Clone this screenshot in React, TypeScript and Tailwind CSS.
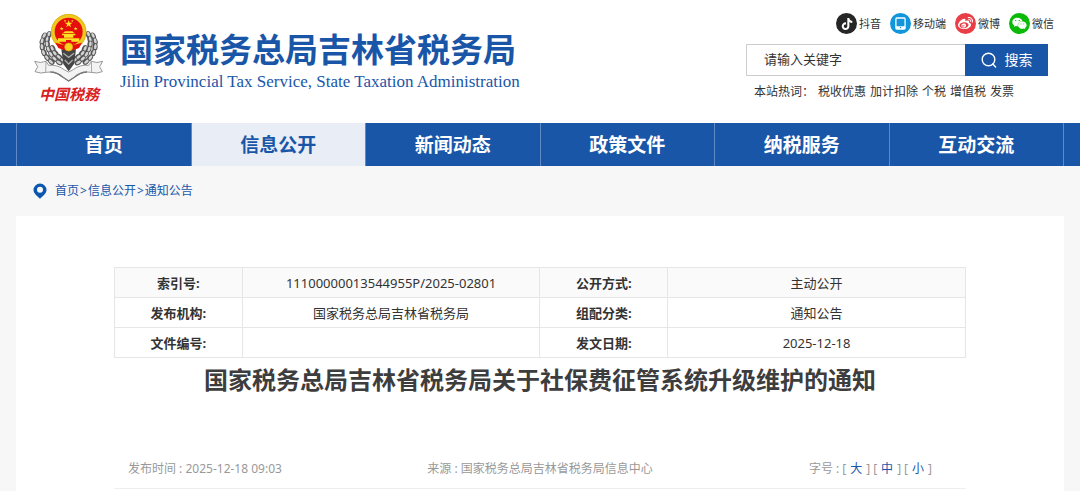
import { FaTiktok, FaWeibo, FaWeixin } from "react-icons/fa6";
import clsx from "clsx";

const socials = [
  { name: "抖音", color: "bg-[#262626]", icon: <FaTiktok className="size-3" /> },
  { name: "移动端", color: "bg-[#1296db]", icon: <TabletIcon /> },
  { name: "微博", color: "bg-[#ea3e46]", icon: <FaWeibo className="size-[15px]" /> },
  { name: "微信", color: "bg-[#09bb07]", icon: <FaWeixin className="size-[15px]" /> },
];

const hotWords = ["税收优惠", "加计扣除", "个税", "增值税", "发票"];

const navItems = ["首页", "信息公开", "新闻动态", "政策文件", "纳税服务", "互动交流"];

const crumbs = ["首页", "信息公开", "通知公告"];

const rows = [
  ["索引号:", "11100000013544955P/2025-02801", "公开方式:", "主动公开"],
  ["发布机构:", "国家税务总局吉林省税务局", "组配分类:", "通知公告"],
  ["文件编号:", "", "发文日期:", "2025-12-18"],
];

function TabletIcon() {
  return (
    <svg viewBox="0 0 12 14" className="h-[13px] w-[11px]" aria-hidden="true">
      <rect x="1" y="1" width="10" height="12" rx="1" fill="none" stroke="#fff" strokeWidth="1.4" />
      <path d="M1 10h10v3H1z" fill="#fff" />
      <circle cx="6" cy="11.4" r="0.8" fill="#1296db" />
    </svg>
  );
}

function Star({ x, y, r }: { x: number; y: number; r: number }) {
  const points = Array.from({ length: 10 }, (_, i) => {
    const radius = i % 2 ? r * 0.4 : r;
    const angle = (Math.PI / 5) * i - Math.PI / 2;
    return `${x + radius * Math.cos(angle)},${y + radius * Math.sin(angle)}`;
  }).join(" ");
  return <polygon points={points} fill="#fbe122" />;
}

const leaves = [
  [45, 62, 20], [40, 76, 10], [40, 91, -5], [44, 106, -20], [52, 121, -35], [63, 134, -48], [76, 145, -60],
  [31, 66, 30], [25, 82, 15], [25, 99, -5], [30, 116, -20], [40, 131, -35], [52, 143, -50],
  [56, 104, -25], [64, 118, -40], [76, 129, -50], [88, 138, -60],
];

function Wreath() {
  return (
    <g>
      {leaves.map(([x, y, a]) => (
        <g key={`${x}-${y}`} transform={`rotate(${a} ${x} ${y})`}>
          <ellipse cx={x} cy={y} rx="8" ry="11" fill="#555" />
          <ellipse cx={x - 1} cy={y - 1} rx="4" ry="8" fill="#d4d4d4" />
        </g>
      ))}
    </g>
  );
}

function Emblem() {
  return (
    <svg viewBox="0 0 210 204" className="h-[68px] w-[70px]" aria-hidden="true">
      <Wreath />
      <g transform="translate(208 0) scale(-1 1)">
        <Wreath />
      </g>
      <path d="M82 106h44l-6 44-16 22-16-22z" fill="#444" />
      <path d="M88 118l16 12 16-12M92 138l12 12 12-12" fill="none" stroke="#aaa" strokeWidth="4" />
      <ellipse cx="104" cy="54" rx="53" ry="54" fill="#f0c81e" />
      <ellipse cx="104" cy="54" rx="52" ry="53" fill="none" stroke="#dba81a" strokeWidth="2" />
      <ellipse cx="104" cy="53" rx="42" ry="42" fill="#e60d0d" />
      <path d="M64 86q40 14 80 0l-9 16q-31 16-62 0z" fill="#e60d0d" />
      <circle cx="104" cy="99" r="12" fill="#f7d51d" stroke="#dba81a" strokeWidth="2" />
      <Star x={104} y={30} r={12} />
      <Star x={83} y={44} r={6} />
      <Star x={93} y={21} r={4} />
      <Star x={115} y={21} r={4} />
      <Star x={125} y={44} r={6} />
      <path d="M87 57l6-5h22l6 5zM84 59h40v5H84zM90 64h28v7H90zM72 73h64v10h-24v-5H96v5H72z" fill="#fbe122" />
      <path
        d="M2 142q17 7 34 0l8 12q26-3 48 14l12 6 12-6q22-17 48-14l8-12q17 7 34 0l-9 16 8 15q-16 7-34 2l-12-1q-20 0-38 16l-17 11-17-11q-18-16-38-16l-12 1q-18 5-34-2l8-15z"
        fill="#f3f3f3"
        stroke="#858585"
        strokeWidth="2.5"
        strokeLinejoin="round"
      />
      <path d="M36 142l-1 33M172 142l1 33" stroke="#999" strokeWidth="2.5" />
      <path d="M49 174q20 0 38 16l17 11 17-11q18-16 38-16" fill="none" stroke="#777" strokeWidth="4" />
    </svg>
  );
}

function Header() {
  return (
    <header className="mx-auto flex h-[123px] w-full max-w-[1048px] justify-between">
      <a href="#" className="flex pl-[18px] pt-[14px]">
        <span className="flex w-[70px] flex-col items-center">
          <Emblem />
          <span className="text-[15px] leading-6 font-bold whitespace-nowrap text-[#d9201f] italic">中国税務</span>
        </span>
        <span className="flex flex-col pl-4 pt-4 text-[#1a56a8]">
          <span className="text-[33px] leading-10 font-bold whitespace-nowrap">国家税务总局吉林省税务局</span>
          <span className="font-['Liberation_Serif',serif] text-[17px] leading-6 whitespace-nowrap">
            Jilin Provincial Tax Service, State Taxation Administration
          </span>
        </span>
      </a>

      <div className="flex flex-col text-[#333]">
        <ul className="flex justify-end gap-[9px] pt-[13px] pr-[10px]">
          {socials.map((item) => (
            <li key={item.name}>
              <a href="#" className="flex items-center gap-[2px] text-[11px] leading-5">
                <span className={clsx("flex size-[21px] items-center justify-center rounded-full text-white", item.color)}>
                  {item.icon}
                </span>
                {item.name}
              </a>
            </li>
          ))}
        </ul>
        <form className="mt-[10px] mr-4 flex h-8 w-[302px]">
          <input
            type="text"
            aria-label="请输入关键字"
            placeholder="请输入关键字"
            className="min-w-0 flex-1 border border-r-0 border-[#ccc] bg-white px-[17px] text-[13px] placeholder:text-[#333]"
          />
          <button type="button" className="flex w-[83px] items-center justify-center gap-2 bg-[#1a56a8] text-sm text-white">
            <svg viewBox="0 0 16 16" className="size-4" fill="none" stroke="currentColor" strokeWidth="1.4" aria-hidden="true">
              <circle cx="7.5" cy="7.5" r="6.3" />
              <path d="M11.8 12l2.8 3" strokeLinecap="round" />
            </svg>
            搜索
          </button>
        </form>
        <p className="mt-[6px] flex gap-1 pl-2 text-xs leading-5">
          <span>本站热词：</span>
          {hotWords.map((word) => (
            <a key={word} href="#">{word}</a>
          ))}
        </p>
      </div>
    </header>
  );
}

function Nav() {
  return (
    <nav className="bg-[#1a56a8]">
      <ul className="mx-auto flex h-[43px] max-w-[1048px]">
        {navItems.map((item, i) => (
          <li key={item} className="flex-1 border-l border-[#5f8ac3] last:border-r">
            <a
              href="#"
              className={clsx(
                "flex h-full items-center justify-center text-[19px] leading-6 font-bold",
                i === 1 ? "bg-[#e8edf6] text-[#1a56a8]" : "text-white"
              )}
            >
              {item}
            </a>
          </li>
        ))}
      </ul>
    </nav>
  );
}

function Breadcrumb() {
  return (
    <div className="flex h-[50px] items-center gap-2 pl-[17px] text-xs leading-5 text-[#1a56a8]">
      <svg viewBox="0 0 14 16" className="h-4 w-[14px]" aria-hidden="true">
        <path
          fillRule="evenodd"
          d="M7 .5A6.5 6.5 0 0 0 .5 7c0 3.6 3.8 6 6.5 8.7C9.700 13 13.500 10.600 13.500 7A6.500 6.500 0 0 0 7 .5zM7 3.800a3 3 0 1 1 0 6 3 3 0 0 1 0-6z"
          fill="#0b57b0"
        />
      </svg>
      <p>
        {crumbs.map((crumb, i) => (
          <span key={crumb}>
            {i > 0 && <span className="px-px">&gt;</span>}
            <a href="#">{crumb}</a>
          </span>
        ))}
      </p>
    </div>
  );
}

function InfoTable() {
  return (
    <table className="w-full table-fixed border-collapse text-center text-[13px] leading-5 text-[#333]">
      <colgroup>
        <col className="w-[15%]" />
        <col className="w-[35%]" />
        <col className="w-[15%]" />
        <col className="w-[35%]" />
      </colgroup>
      <tbody>
        {rows.map((row) => (
          <tr key={row[0]} className="h-[30px] first:bg-[#fafafa]">
            {row.map((cell, i) =>
              i % 2 === 0 ? (
                <th key={i} scope="row" className="border border-[#e6e6e6] font-bold">{cell}</th>
              ) : (
                <td key={i} className="border border-[#e6e6e6]">{cell}</td>
              )
            )}
          </tr>
        ))}
      </tbody>
    </table>
  );
}

export default function App() {
  return (
    <div className="flex min-h-screen flex-col bg-[#f7f7f7] font-['Noto_Sans','Noto_Sans_CJK_SC',sans-serif]">
      <div className="bg-white">
        <Header />
      </div>
      <Nav />
      <div className="mx-auto flex w-full max-w-[1048px] flex-1 flex-col">
        <Breadcrumb />
        <main className="flex-1 bg-white px-[98px] pt-[51px]">
          <InfoTable />
          <h1 className="mt-1 text-center text-2xl leading-9 font-bold text-[#3d3d3d]">
            国家税务总局吉林省税务局关于社保费征管系统升级维护的通知
          </h1>
          <div className="mt-[51px] grid h-10 grid-cols-3 items-center border-b border-[#eee] text-xs leading-5 text-[#999]">
            <span className="pl-[14px]">发布时间 : 2025-12-18 09:03</span>
            <span className="text-center">来源 : 国家税务总局吉林省税务局信息中心</span>
            <span className="flex justify-end gap-[3px] pr-[34px]">
              字号 :
              {["大", "中", "小"].map((size) => (
                <span key={size} className="flex gap-1">
                  [<button type="button" className="text-[#1a56a8]">{size}</button>]
                </span>
              ))}
            </span>
          </div>
        </main>
      </div>
    </div>
  );
}
